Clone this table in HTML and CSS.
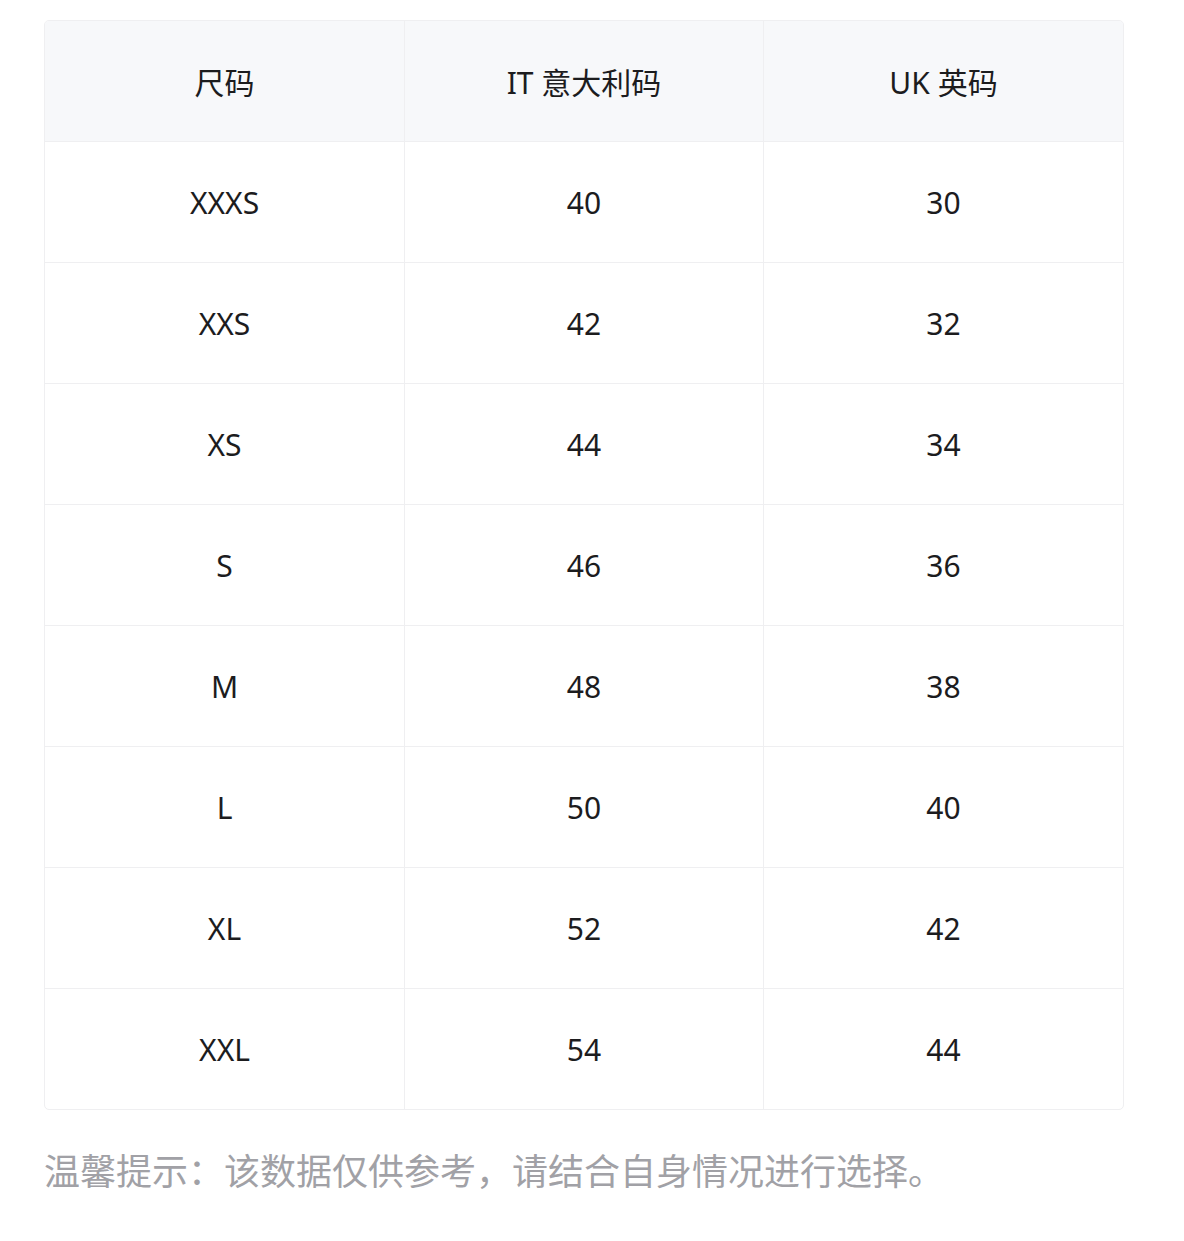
FILE: index.html
```html
<!DOCTYPE html>
<html lang="zh-CN">
<head>
<meta charset="utf-8">
<link rel="stylesheet" href="styles.css">
</head>
<body>
<div class="page">
  <div class="table">
    <div class="row head">
      <div class="cell">尺码</div>
      <div class="cell">IT 意大利码</div>
      <div class="cell">UK 英码</div>
    </div>
    <div class="row"><div class="cell">XXXS</div><div class="cell">40</div><div class="cell">30</div></div>
    <div class="row"><div class="cell">XXS</div><div class="cell">42</div><div class="cell">32</div></div>
    <div class="row"><div class="cell">XS</div><div class="cell">44</div><div class="cell">34</div></div>
    <div class="row"><div class="cell">S</div><div class="cell">46</div><div class="cell">36</div></div>
    <div class="row"><div class="cell">M</div><div class="cell">48</div><div class="cell">38</div></div>
    <div class="row"><div class="cell">L</div><div class="cell">50</div><div class="cell">40</div></div>
    <div class="row"><div class="cell">XL</div><div class="cell">52</div><div class="cell">42</div></div>
    <div class="row"><div class="cell">XXL</div><div class="cell">54</div><div class="cell">44</div></div>
  </div>
  <p class="note">温馨提示：该数据仅供参考，请结合自身情况进行选择。</p>
</div>
</body>
</html>
```
FILE: styles.css
```css
* { box-sizing: border-box; }
html, body { margin: 0; padding: 0; background: #fff; }
body {
  font-family: "Noto Sans", "Noto Sans CJK SC", sans-serif;
  color: #1c1c1e;
}
.page {
  padding: 20px 60px 0 44px;
}
.table {
  width: 1080px;
  border: 1px solid #efeff1;
  border-radius: 5px;
  overflow: hidden;
}
.row {
  display: grid;
  grid-template-columns: 359px 359px 1fr;
  height: 121px;
  border-top: 1px solid #efeff1;
}
.row.head {
  border-top: none;
  height: 120px;
  background: #f7f8fa;
}
.cell {
  display: flex;
  align-items: center;
  justify-content: center;
  font-size: 30px;
  border-left: 1px solid #efeff1;
}
.cell:first-child { border-left: none; }
.note {
  margin: 38px 0 0 0;
  font-family: "Noto Sans CJK SC", sans-serif;
  font-size: 36px;
  color: #a1a1a6;
  line-height: 1.2;
}
```
